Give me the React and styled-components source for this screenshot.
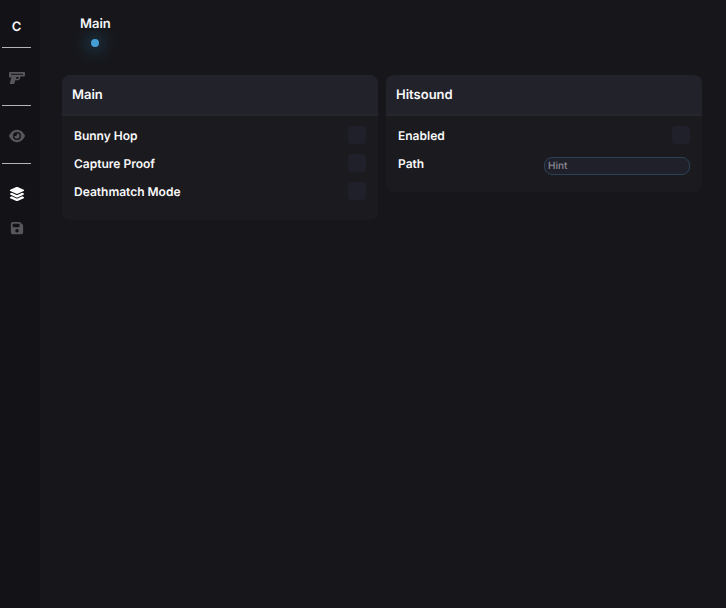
import React, { useState } from 'react';
import styled, { createGlobalStyle } from 'styled-components';
import { FaEye, FaFloppyDisk, FaLayerGroup } from 'react-icons/fa6';

const GlobalStyle = createGlobalStyle`
    * {
        box-sizing: border-box;
    }
    body {
        margin: 0;
        background: #17171b;
        color: #f8f8fa;
        font-family: Inter, sans-serif;
        font-weight: 600;
        text-rendering: geometricPrecision;
    }
    button,
    input {
        font: inherit;
        text-rendering: inherit;
    }
`;

const Root = styled.div`
    display: flex;
    min-height: 100vh;
`;

const Sidebar = styled.nav`
    display: flex;
    flex-direction: column;
    flex: none;
    width: 40px;
    padding: 10px 9px 0 2px;
    background: #131217;
`;

const Logo = styled.div`
    height: 37px;
    font-size: 13px;
    line-height: 34px;
    text-align: center;
`;

const NavGroup = styled.div`
    display: flex;
    flex-direction: column;
    height: ${props => (props.$last ? 'auto' : '58px')};
    padding-top: 13px;
    border-top: 1px solid #b4b4b8;
`;

const NavButton = styled.button`
    display: flex;
    align-items: center;
    justify-content: center;
    height: 34px;
    padding: 0;
    border: 0;
    background: none;
    color: ${props => (props.$active ? '#ffffff' : '#56565b')};
    font-size: ${props => props.$size || 16}px;
    cursor: pointer;
`;

const Content = styled.main`
    flex: 1;
    min-width: 0;
    padding: 14px 24px 24px 22px;
`;

const Tabs = styled.div`
    display: flex;
    padding: 0 18px;
    margin-bottom: 28px;
`;

const Tab = styled.button`
    display: flex;
    flex-direction: column;
    align-items: center;
    gap: 5px;
    padding: 0;
    border: 0;
    background: none;
    color: inherit;
    font-size: 13px;
    line-height: 20px;
    cursor: pointer;
`;

const Dot = styled.span`
    width: 8px;
    height: 8px;
    border-radius: 50%;
    background: #459fd6;
    box-shadow: 0 0 16px 3px rgba(40, 130, 180, 0.5);
`;

const Panels = styled.div`
    display: grid;
    grid-template-columns: 1fr 1fr;
    align-items: start;
    gap: 8px;
`;

const Panel = styled.section`
    padding-bottom: 15px;
    border-radius: 8px;
    background: #1b1b1f;
    overflow: hidden;
`;

const PanelTitle = styled.h2`
    margin: 0;
    height: 41px;
    padding: 0 10px;
    border-bottom: 2px solid #26262d;
    background: #22222b;
    font-size: 13px;
    font-weight: 600;
    line-height: 40px;
`;

const Rows = styled.div`
    padding: 5px 12px 0;
`;

const Row = styled.label`
    display: flex;
    align-items: center;
    justify-content: space-between;
    height: 28px;
    font-size: 12px;
`;

const Checkbox = styled.input.attrs({ type: 'checkbox' })`
    appearance: none;
    width: 18px;
    height: 18px;
    margin: 0;
    border-radius: 4px;
    background: #20202b;
    cursor: pointer;

    &:checked {
        background: #459fd6;
    }
`;

const TextInput = styled.input.attrs({ type: 'text' })`
    align-self: flex-end;
    width: 50%;
    height: 18px;
    margin-bottom: 2px;
    padding: 0 3px;
    border: 1px solid #2b4257;
    border-radius: 8px;
    outline: none;
    background: #20202b;
    color: #f8f8fa;
    font-size: 10px;
    font-weight: 500;

    &::placeholder {
        color: #8c8c94;
        opacity: 1;
    }
`;

// Pistol with a hollow slide and a slanted grip
function GunIcon() {
    return (
        <svg width="16" height="12" viewBox="0 0 16 12" fill="currentColor">
            <path
                fillRule="evenodd"
                d="M.8 0H15.2a.8.8 0 0 1 .8.8V3.2a1.3 1.3 0 0 1-1.3 1.3H11.6L10.7 7.2A1.6 1.6 0 0 1 9.2 8.3H6.3L5.4 11.4a.8.8 0 0 1-.8.6H1.6a.8.8 0 0 1-.8-1L2.4 5.5H.8A.8.8 0 0 1 0 4.7V.8A.8.8 0 0 1 .8 0ZM2 1.8V2.8H14V1.8ZM7.3 5 6.8 6.8H8.9a.6.6 0 0 0 .5-.4L9.9 5Z"
            />
        </svg>
    );
}

function CheckRow({ label }) {
    const [checked, setChecked] = useState(false);

    return (
        <Row>
            {label}
            <Checkbox checked={checked} onChange={e => setChecked(e.target.checked)} />
        </Row>
    );
}

export default function App() {
    const [page, setPage] = useState('misc');
    const [path, setPath] = useState('');

    const navProps = name => ({
        $active: page === name,
        'aria-label': name,
        onClick: () => setPage(name)
    });

    return (
        <Root>
            <GlobalStyle />
            <Sidebar>
                <Logo>C</Logo>
                <NavGroup>
                    <NavButton {...navProps('weapons')}>
                        <GunIcon />
                    </NavButton>
                </NavGroup>
                <NavGroup>
                    <NavButton {...navProps('visuals')}>
                        <FaEye />
                    </NavButton>
                </NavGroup>
                <NavGroup $last>
                    <NavButton {...navProps('misc')}>
                        <FaLayerGroup />
                    </NavButton>
                    <NavButton {...navProps('configs')} $size={14}>
                        <FaFloppyDisk />
                    </NavButton>
                </NavGroup>
            </Sidebar>
            <Content>
                <Tabs>
                    <Tab>
                        Main
                        <Dot />
                    </Tab>
                </Tabs>
                <Panels>
                    <Panel>
                        <PanelTitle>Main</PanelTitle>
                        <Rows>
                            <CheckRow label="Bunny Hop" />
                            <CheckRow label="Capture Proof" />
                            <CheckRow label="Deathmatch Mode" />
                        </Rows>
                    </Panel>
                    <Panel>
                        <PanelTitle>Hitsound</PanelTitle>
                        <Rows>
                            <CheckRow label="Enabled" />
                            <Row>
                                Path
                                <TextInput
                                    placeholder="Hint"
                                    value={path}
                                    onChange={e => setPath(e.target.value)}
                                />
                            </Row>
                        </Rows>
                    </Panel>
                </Panels>
            </Content>
        </Root>
    );
}
